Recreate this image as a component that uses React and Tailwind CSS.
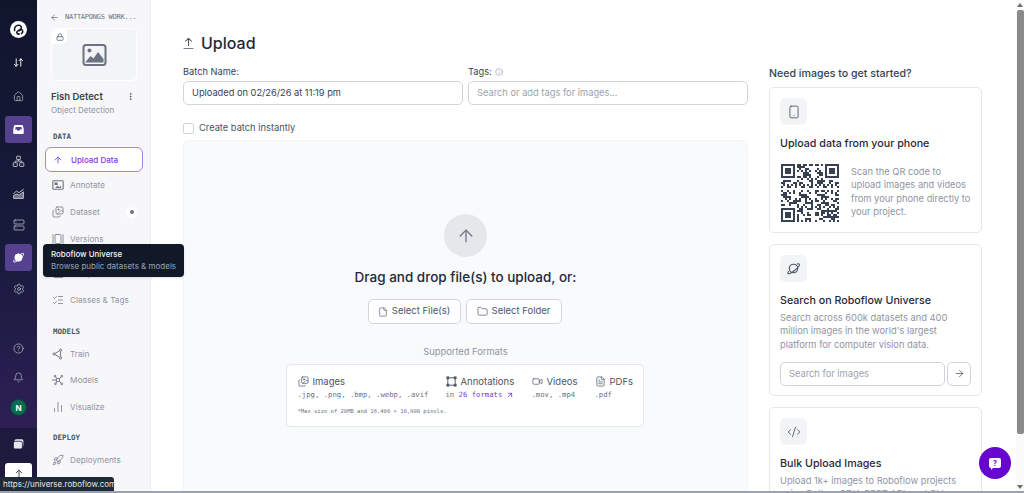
import {
  ArrowDownUp, House, Server, Settings, CircleHelp, Bell,
  ArrowLeft, Lock, EllipsisVertical, ArrowUp, Images, GalleryHorizontal,
  ListChecks, Rocket, ChartColumn, ChartNoAxesColumn, File, Folder, ArrowUpRight, Video, FileText,
  Smartphone, CodeXml, ArrowRight, Info,
} from 'lucide-react';

const mono = { fontFamily: '"DejaVu Sans Mono", monospace' };

const qrSize = 29;
const isFinder = (x, y, ox, oy) => {
  const dx = x - ox;
  const dy = y - oy;
  if (dx < 0 || dy < 0 || dx > 6 || dy > 6) return null;
  if (dx === 0 || dy === 0 || dx === 6 || dy === 6) return true;
  return dx >= 2 && dx <= 4 && dy >= 2 && dy <= 4;
};
const qrCells = [];
for (let y = 0; y < qrSize; y++) {
  for (let x = 0; x < qrSize; x++) {
    const f = isFinder(x, y, 0, 0) ?? isFinder(x, y, 22, 0) ?? isFinder(x, y, 0, 22);
    const nearFinder = (x < 8 && y < 8) || (x > 20 && y < 8) || (x < 8 && y > 20);
    const h = (x * 31 + y * 17 + x * y * 7 + (x ^ (y * 3)) * 11) % 9;
    const on = f !== null ? f : nearFinder ? false : h < 4;
    if (on) qrCells.push([x, y]);
  }
}

const QrCode = () => (
  <svg viewBox="0 0 29 29" className="w-[58px] h-[58px] shrink-0" shapeRendering="geometricPrecision">
    {qrCells.map(([x, y]) => (
      <rect key={`${x}-${y}`} x={x} y={y} width="1" height="1" fill="#374151" />
    ))}
  </svg>
);

const Logo = () => (
  <svg viewBox="0 0 24 24" className="w-[17px] h-[17px]">
    <circle cx="12" cy="12" r="12" fill="#fff" />
    <path d="M6.500 13.500C5.500 8.500 9 5.500 12.500 6c3 .4 4.500 3 3 5-1.500 2-6 2.500-6 5 0 1.500 1.500 2.500 3.500 2.500" fill="none" stroke="#12162e" strokeWidth="2.200" strokeLinecap="round" />
    <path d="M13 13.500c2-1.500 4.500-1.500 5 .5.300 1.500-.5 3-1.800 3.800" fill="none" stroke="#12162e" strokeWidth="2.200" strokeLinecap="round" />
  </svg>
);

const Planet = ({ size = 14, filled = false, className = '' }) => (
  <svg viewBox="0 0 16 16" width={size} height={size} fill="none" stroke="currentColor" strokeWidth="1.200" className={className}>
    <circle cx="8" cy="8" r="4.500" fill={filled ? 'currentColor' : 'none'} />
    <path d="M11.800 3.200c1.300-.4 2.100-.4 2.400 0 .7.900-1.500 3.900-4.800 6.700-3.300 2.800-6.600 4.400-7.300 3.500-.3-.4-.1-1.200.6-2.200" strokeLinecap="round" />
  </svg>
);

const InboxSolid = () => (
  <svg viewBox="0 0 16 16" width="13" height="13">
    <path d="M4 2.500h8c.8 0 1.300.4 1.500 1l1 4.500v4c0 1-.7 1.500-1.500 1.500H3c-.8 0-1.500-.5-1.500-1.500V8l1-4.500c.2-.6.700-1 1.500-1z" fill="#fff" />
    <path d="M4.500 5h7l.6 3H10c-.4 1-1.100 1.500-2 1.500S6.400 9 6 8H3.900z" fill="#55418f" />
  </svg>
);

const Hierarchy = () => (
  <svg viewBox="0 0 16 16" width="13" height="13" fill="none" stroke="currentColor" strokeWidth="1.200">
    <rect x="5.700" y="1.500" width="4.600" height="4" rx=".6" />
    <rect x="1.500" y="9.500" width="5" height="4.500" rx=".6" />
    <rect x="9.500" y="9.500" width="5" height="4.500" rx=".6" />
    <path d="M8 5.500v2M4 9.500v-2h8v2" />
  </svg>
);

const AreaTrend = () => (
  <svg viewBox="0 0 16 16" width="13" height="13" fill="none" stroke="currentColor" strokeWidth="1.200">
    <path d="M2 14V10.500l3.500-2 3 1.500 5.500-4V14z" fill="currentColor" fillOpacity=".55" />
    <path d="M2 8l3.500-3 3 2L14 3" strokeLinecap="round" />
  </svg>
);

const StackSolid = () => (
  <svg viewBox="0 0 16 16" width="13" height="13">
    <rect x="3" y="1.500" width="11" height="9" rx="2" fill="#e5e7eb" />
    <rect x="1.800" y="4" width="11" height="9.500" rx="2" fill="#e5e7eb" stroke="#1d1a3e" strokeWidth="1" />
  </svg>
);

const UploadLine = ({ size = 12 }) => (
  <svg viewBox="0 0 12 14" width={size} height={size * 14 / 12} fill="none" stroke="currentColor" strokeWidth="1.100" strokeLinecap="round" strokeLinejoin="round">
    <path d="M6 9.500V1.500M2.800 4.500 6 1.500l3.200 3M1 12.800h10" />
  </svg>
);

const ImageSolid = () => (
  <svg viewBox="0 0 24 22" width="25" height="22">
    <rect x="1" y="1" width="22" height="20" rx="2.500" fill="none" stroke="#6b7280" strokeWidth="2" />
    <circle cx="7" cy="6.500" r="2" fill="#6b7280" />
    <path d="M3 18l5-6 3 2.500 4.500-6.500L21 15v3.500H3z" fill="#6b7280" />
  </svg>
);

const AnnotateIcon = ({ size, className }) => (
  <svg viewBox="0 0 14 14" width={size} height={size} className={className}>
    <rect x="1" y="2" width="12" height="10" rx="1" fill="none" stroke="currentColor" strokeWidth="1.300" />
    <rect x="3" y="4" width="3.500" height="3" fill="currentColor" />
    <path d="M3.500 10.500l3-2.500 2 1.500 2-2v3z" fill="currentColor" />
  </svg>
);

const TrainIcon = ({ size, className }) => (
  <svg viewBox="0 0 14 14" width={size} height={size} fill="none" stroke="currentColor" strokeWidth="1.100" className={className}>
    <circle cx="2.500" cy="7" r="1.300" />
    <circle cx="10" cy="2.500" r="1.300" />
    <circle cx="10" cy="11.500" r="1.300" />
    <path d="M3.700 6.300 8.900 3.200M3.700 7.700 8.900 10.800M10 3.800v6.400" />
  </svg>
);

const ModelsIcon = ({ size, className }) => (
  <svg viewBox="0 0 14 14" width={size} height={size} fill="none" stroke="currentColor" strokeWidth="1.100" className={className}>
    <circle cx="7" cy="7" r="2" />
    <circle cx="3.500" cy="2.500" r="1" />
    <circle cx="11.500" cy="2.500" r="1" />
    <circle cx="11.500" cy="11.500" r="1" />
    <circle cx="4" cy="11.500" r="1" />
    <path d="M4.100 3.300 5.700 5.500M10.900 3.300 8.400 5.500M10.900 10.800 8.400 8.500M4.600 10.700 5.700 8.500M0 7h5" />
  </svg>
);

const AnnotationsIcon = () => (
  <svg viewBox="0 0 12 12" width="11" height="11" fill="none" stroke="currentColor" strokeWidth="1">
    <rect x="2" y="2" width="8" height="8" />
    <rect x="1" y="1" width="2" height="2" fill="currentColor" />
    <rect x="9" y="1" width="2" height="2" fill="currentColor" />
    <rect x="1" y="9" width="2" height="2" fill="currentColor" />
    <rect x="9" y="9" width="2" height="2" fill="currentColor" />
  </svg>
);

const RailIcon = ({ h, children }) => (
  <div className={`${h} flex items-center justify-center text-[#bcc0cc]`}>{children}</div>
);

const RailActive = ({ children }) => (
  <div className="w-[27px] h-[27px] rounded-[3px] bg-[#55418f] flex items-center justify-center text-white">{children}</div>
);

const NavItem = ({ Icon, label, badge, className = 'h-[26.700px]' }) => (
  <div className={`flex items-center pl-[15px] text-[#8f95a3] text-[8.200px] ${className}`}>
    <Icon size={12} strokeWidth={1.500} className="text-[#6b7280] shrink-0" />
    <span className="ml-[6px] w-[56px] whitespace-nowrap">{label}</span>
    {badge && (
      <span className="w-[11px] h-[11px] rounded-full bg-white flex items-center justify-center">
        <span className="w-[4px] h-[4px] rounded-full bg-[#6b7280]" />
      </span>
    )}
  </div>
);

const SectionLabel = ({ children, className = '' }) => (
  <div style={mono} className={`pl-[16px] text-[7.500px] font-bold text-[#4b5563] leading-[10px] ${className}`}>
    {children}
  </div>
);

const FormatCol = ({ icon, title, className = '', children }) => (
  <div className={className}>
    <div className="flex items-center gap-[4px] text-[#4b5563] text-[9.500px] leading-[13px]">
      {icon}
      <span>{title}</span>
    </div>
    <div style={mono} className="text-[7.250px] text-[#6b7280] mt-[2px] leading-[10px] whitespace-nowrap">{children}</div>
  </div>
);

const IconTile = ({ children }) => (
  <div className="w-[27px] h-[27px] rounded-[5px] bg-[#f3f4f6] flex items-center justify-center text-[#4b5563]">
    {children}
  </div>
);

export default function App() {
  return (
    <div className="relative flex w-full h-screen overflow-hidden bg-white text-[#111827]" style={{ fontFamily: 'Inter, sans-serif' }}>
      {/* Icon rail */}
      <aside className="w-[37px] shrink-0 flex flex-col items-center bg-gradient-to-b from-[#11152c] via-[#181a3c] to-[#35215f]">
        <div className="h-[55px] pt-[21px] flex justify-center shrink-0"><Logo /></div>
        <RailIcon h="h-[14px]"><span className="text-white"><ArrowDownUp size={11} strokeWidth={2} /></span></RailIcon>
        <RailIcon h="h-[47px] pt-[8px]"><House size={11} strokeWidth={1.500} /></RailIcon>
        <RailActive><InboxSolid /></RailActive>
        <RailIcon h="h-[37px]"><Hierarchy /></RailIcon>
        <RailIcon h="h-[27px]"><AreaTrend /></RailIcon>
        <RailIcon h="h-[35px]"><Server size={12} strokeWidth={1.500} /></RailIcon>
        <div className="mt-[2px]"><RailActive><Planet size={13} filled /></RailActive></div>
        <RailIcon h="h-[36px]"><Settings size={12} strokeWidth={1.500} /></RailIcon>
        <RailIcon h="h-[24px] mt-[29px]"><CircleHelp size={11} strokeWidth={1.500} /></RailIcon>
        <RailIcon h="h-[34px]"><Bell size={11} strokeWidth={1.500} /></RailIcon>
        <div className="w-[17px] h-[17px] mt-[5px] shrink-0 rounded-full bg-[#0b6b52] border border-[#0c3f3a] text-white text-[8px] font-bold flex items-center justify-center">N</div>
        <div className="w-full flex-1 mt-[12px] bg-[#1d1a3e] flex flex-col items-center">
          <div className="mt-[10px]"><StackSolid /></div>
          <div className="mt-[12px] w-[27px] flex-1 rounded-t-[3px] bg-white flex justify-center pt-[6px] text-[#374151]"><UploadLine size={10} /></div>
        </div>
      </aside>

      {/* Project sidebar */}
      <aside className="w-[114px] shrink-0 bg-[#f7f7fa] border-r border-[#eceef2] pt-[12px]">
        <div className="flex items-center pl-[13px] h-[10px] text-[#6b7280]">
          <ArrowLeft size={9} strokeWidth={2} />
          <span style={mono} className="ml-[6px] text-[7px] tracking-[-0.250px] whitespace-nowrap">NATTAPONGS WORK...</span>
        </div>
        <div className="relative ml-[14px] mt-[6px] w-[86px] h-[53px] rounded-[5px] bg-[#f3f4f6] border border-white flex items-center justify-center">
          <ImageSolid />
          <div className="absolute left-0 top-0 w-[15px] h-[15px] rounded-br-[5px] rounded-tl-[5px] bg-white flex items-center justify-center text-[#4b5563]">
            <Lock size={8} strokeWidth={2} />
          </div>
        </div>
        <div className="flex items-center justify-between pl-[14px] pr-[15px] mt-[9px]">
          <span className="text-[9.500px] font-semibold text-[#374151] leading-[13px]">Fish Detect</span>
          <EllipsisVertical size={9} strokeWidth={2.500} className="text-[#4b5563]" />
        </div>
        <div className="pl-[14px] mt-[1px] text-[8px] text-[#8f95a3] leading-[13px]">Object Detection</div>

        <SectionLabel className="mt-[15px]">DATA</SectionLabel>
        <div className="ml-[8px] mt-[5px] w-[98px] h-[25px] rounded-[6px] bg-white border border-[#a981e8] flex items-center pl-[7px] text-[#7c3aed] text-[8px] font-medium">
          <ArrowUp size={10} strokeWidth={2} />
          <span className="ml-[8px]">Upload Data</span>
        </div>
        <NavItem Icon={AnnotateIcon} label="Annotate" />
        <NavItem Icon={Images} label="Dataset" badge />
        <NavItem Icon={GalleryHorizontal} label="Versions" />
        <NavItem Icon={ChartColumn} label="Analytics" className="h-[26.700px] mt-[8px]" />
        <NavItem Icon={ListChecks} label="Classes & Tags" />
        <SectionLabel className="mt-[14px]">MODELS</SectionLabel>
        <div className="h-[3px]" />
        <NavItem Icon={TrainIcon} label="Train" />
        <NavItem Icon={ModelsIcon} label="Models" />
        <NavItem Icon={ChartNoAxesColumn} label="Visualize" />
        <SectionLabel className="mt-[12px]">DEPLOY</SectionLabel>
        <div className="h-[4px]" />
        <NavItem Icon={Rocket} label="Deployments" />
      </aside>

      {/* Main */}
      <main className="flex-1 min-w-0 flex pl-[32px] pr-[34px] pt-[32px] gap-[21px] overflow-hidden">
        <div className="flex-1 min-w-0">
          <div className="flex items-center gap-[7px] h-[22px] text-[#4b5563]">
            <UploadLine size={11} />
            <h1 className="text-[16px] font-medium text-[#1f2937]">Upload</h1>
          </div>
          <div className="flex gap-[5px] mt-[11px]">
            <div className="w-[280px]">
              <label className="block text-[9.250px] text-[#374151] leading-[14px]">Batch Name:</label>
              <div className="mt-[2px] h-[24px] rounded-[5px] border border-[#d1d5db] bg-white flex items-center px-[8px] text-[9.250px] text-[#374151]">
                Uploaded on 02/26/26 at 11:19 pm
              </div>
            </div>
            <div className="flex-1">
              <label className="flex items-center gap-[3px] text-[9.250px] text-[#374151] leading-[14px]">
                Tags: <Info size={8} className="text-[#9ca3af]" />
              </label>
              <div className="mt-[2px] h-[24px] rounded-[5px] border border-[#d1d5db] bg-white flex items-center px-[8px] text-[9.300px] text-[#9ca3af]">
                Search or add tags for images...
              </div>
            </div>
          </div>
          <div className="flex items-center gap-[5px] mt-[17px] h-[12px]">
            <span className="w-[11px] h-[11px] rounded-[2px] border border-[#d1d5db] bg-white" />
            <span className="text-[9.300px] text-[#4b5563]">Create batch instantly</span>
          </div>

          <section className="mt-[6px] h-[420px] rounded-[6px] border border-[#f3f4f6] bg-[#f9fafb] flex flex-col items-center pt-[73px]">
            <div className="w-[43px] h-[43px] rounded-full bg-[#e5e7eb] flex items-center justify-center">
              <ArrowUp size={20} strokeWidth={1.500} className="text-[#6b7280]" />
            </div>
            <p className="mt-[11px] text-[13.500px] font-medium text-[#1f2937] leading-[18px]">Drag and drop file(s) to upload, or:</p>
            <div className="flex gap-[5px] mt-[13px] -ml-[2px]">
              <button className="h-[25px] w-[93px] rounded-[5px] border border-[#d1d5db] bg-white flex items-center justify-center gap-[4px] text-[9.500px] text-[#4b5563]">
                <File size={10} strokeWidth={1.500} /> Select File(s)
              </button>
              <button className="h-[25px] w-[96px] rounded-[5px] border border-[#d1d5db] bg-white flex items-center justify-center gap-[4px] text-[9.500px] text-[#4b5563]">
                <Folder size={11} strokeWidth={1.500} /> Select Folder
              </button>
            </div>
            <p className="mt-[22px] text-[9.300px] text-[#8f95a3] leading-[12px]">Supported Formats</p>
            <div className="mt-[6px] -ml-[2px] w-[358px] h-[63px] rounded-[5px] border border-[#e5e7eb] bg-white pl-[11px] pt-[10px]">
              <div className="flex">
                <FormatCol icon={<Images size={11} strokeWidth={1.500} />} title="Images" className="w-[148px]">.jpg, .png, .bmp, .webp, .avif</FormatCol>
                <FormatCol icon={<AnnotationsIcon />} title="Annotations" className="w-[86px]">
                  in <span className="text-[#7c3aed]">26 formats</span>
                  <ArrowUpRight size={8} strokeWidth={2.500} className="inline ml-[4px] text-[#7c3aed]" />
                </FormatCol>
                <FormatCol icon={<Video size={11} strokeWidth={1.500} />} title="Videos" className="w-[63px]">.mov, .mp4</FormatCol>
                <FormatCol icon={<FileText size={11} strokeWidth={1.500} />} title="PDFs">.pdf</FormatCol>
              </div>
              <div style={mono} className="mt-[7px] text-[5.500px] text-[#6b7280] leading-[8px]">*Max size of 20MB and 16,400 × 10,900 pixels.</div>
            </div>
          </section>
        </div>

        <div className="w-[213px] shrink-0 pt-[2px]">
          <h2 className="text-[10.600px] font-medium text-[#374151] leading-[14px] mt-[33px]">Need images to get started?</h2>
          <div className="mt-[6px] h-[146px] rounded-[5px] border border-[#e5e7eb] p-[10px]">
            <IconTile><Smartphone size={14} strokeWidth={1.500} /></IconTile>
            <h3 className="mt-[12px] text-[10.700px] font-medium text-[#1f2937] leading-[14px]">Upload data from your phone</h3>
            <div className="flex gap-[12px] mt-[13px] pl-[1px]">
              <QrCode />
              <p className="text-[9.300px] leading-[13.300px] text-[#8f95a3] mt-[1px] whitespace-nowrap">
                Scan the QR code to<br />upload images and videos<br />from your phone directly to<br />your project.
              </p>
            </div>
          </div>
          <div className="mt-[11px] h-[152px] rounded-[5px] border border-[#e5e7eb] p-[10px]">
            <IconTile><Planet size={15} /></IconTile>
            <h3 className="mt-[12px] text-[10.700px] font-medium text-[#1f2937] leading-[14px]">Search on Roboflow Universe</h3>
            <p className="mt-[3px] text-[9.300px] leading-[13.300px] text-[#8f95a3]">Search across 600k datasets and 400 million images in the world's largest platform for computer vision data.</p>
            <div className="flex gap-[2px] mt-[11px]">
              <div className="flex-1 h-[24px] rounded-[5px] border border-[#d1d5db] flex items-center px-[8px] text-[9.300px] text-[#9ca3af]">Search for images</div>
              <div className="w-[24px] h-[24px] rounded-[5px] border border-[#d1d5db] flex items-center justify-center text-[#374151]"><ArrowRight size={11} strokeWidth={1.500} /></div>
            </div>
          </div>
          <div className="mt-[11px] h-[150px] rounded-[5px] border border-[#e5e7eb] p-[10px]">
            <IconTile><CodeXml size={14} strokeWidth={1.500} /></IconTile>
            <h3 className="mt-[12px] text-[10.700px] font-medium text-[#1f2937] leading-[14px]">Bulk Upload Images</h3>
            <p className="mt-[3px] text-[9.300px] leading-[13.300px] text-[#8f95a3]">Upload 1k+ images to Roboflow projects using Python SDK, REST API, and CLI.</p>
          </div>
        </div>
      </main>

      {/* Scrollbar */}
      <div className="w-[8px] shrink-0 bg-[#fafafa] flex flex-col items-center">
        <div className="h-[10px] flex items-center justify-center">
          <span className="w-0 h-0 border-x-[3px] border-x-transparent border-b-[4px] border-b-[#6b6b6b]" />
        </div>
        <div className="w-[7px] h-[424px] rounded-[2px] bg-[#8a8a8a]" />
        <div className="flex-1" />
        <div className="h-[12px] flex items-center justify-center">
          <span className="w-0 h-0 border-x-[3px] border-x-transparent border-t-[4px] border-t-[#6b6b6b]" />
        </div>
      </div>

      {/* Overlays */}
      <div className="absolute left-[43px] top-[244px] w-[141px] h-[33px] rounded-[4px] bg-[#111827] px-[8px] pt-[4px] shadow">
        <div className="text-[7.900px] leading-[12px] text-[#f3f4f6] font-medium">Roboflow Universe</div>
        <div className="text-[8px] leading-[13px] text-[#9ca3af] whitespace-nowrap">Browse public datasets &amp; models</div>
      </div>
      <div className="absolute left-0 bottom-[2px] w-[114px] h-[14px] bg-[#1f2937] rounded-tr-[3px] pl-[3px] text-[8px] leading-[14px] text-[#e5e7eb] whitespace-nowrap">
        https://universe.roboflow.com
      </div>
      <div className="absolute left-0 right-0 bottom-0 h-[2px] bg-[#9ca3af]" />
      <div className="absolute left-[979px] top-[447px] w-[32px] h-[32px] rounded-full bg-[#6706ce] flex items-center justify-center">
        <div className="relative w-[12px] h-[10px] rounded-[2px] bg-white flex items-center justify-center text-[#6706ce] text-[7px] font-bold leading-none">
          ?
          <span className="absolute -bottom-[2px] left-[2px] w-0 h-0 border-l-[3px] border-l-white border-b-[3px] border-b-transparent" />
        </div>
      </div>
    </div>
  );
}
